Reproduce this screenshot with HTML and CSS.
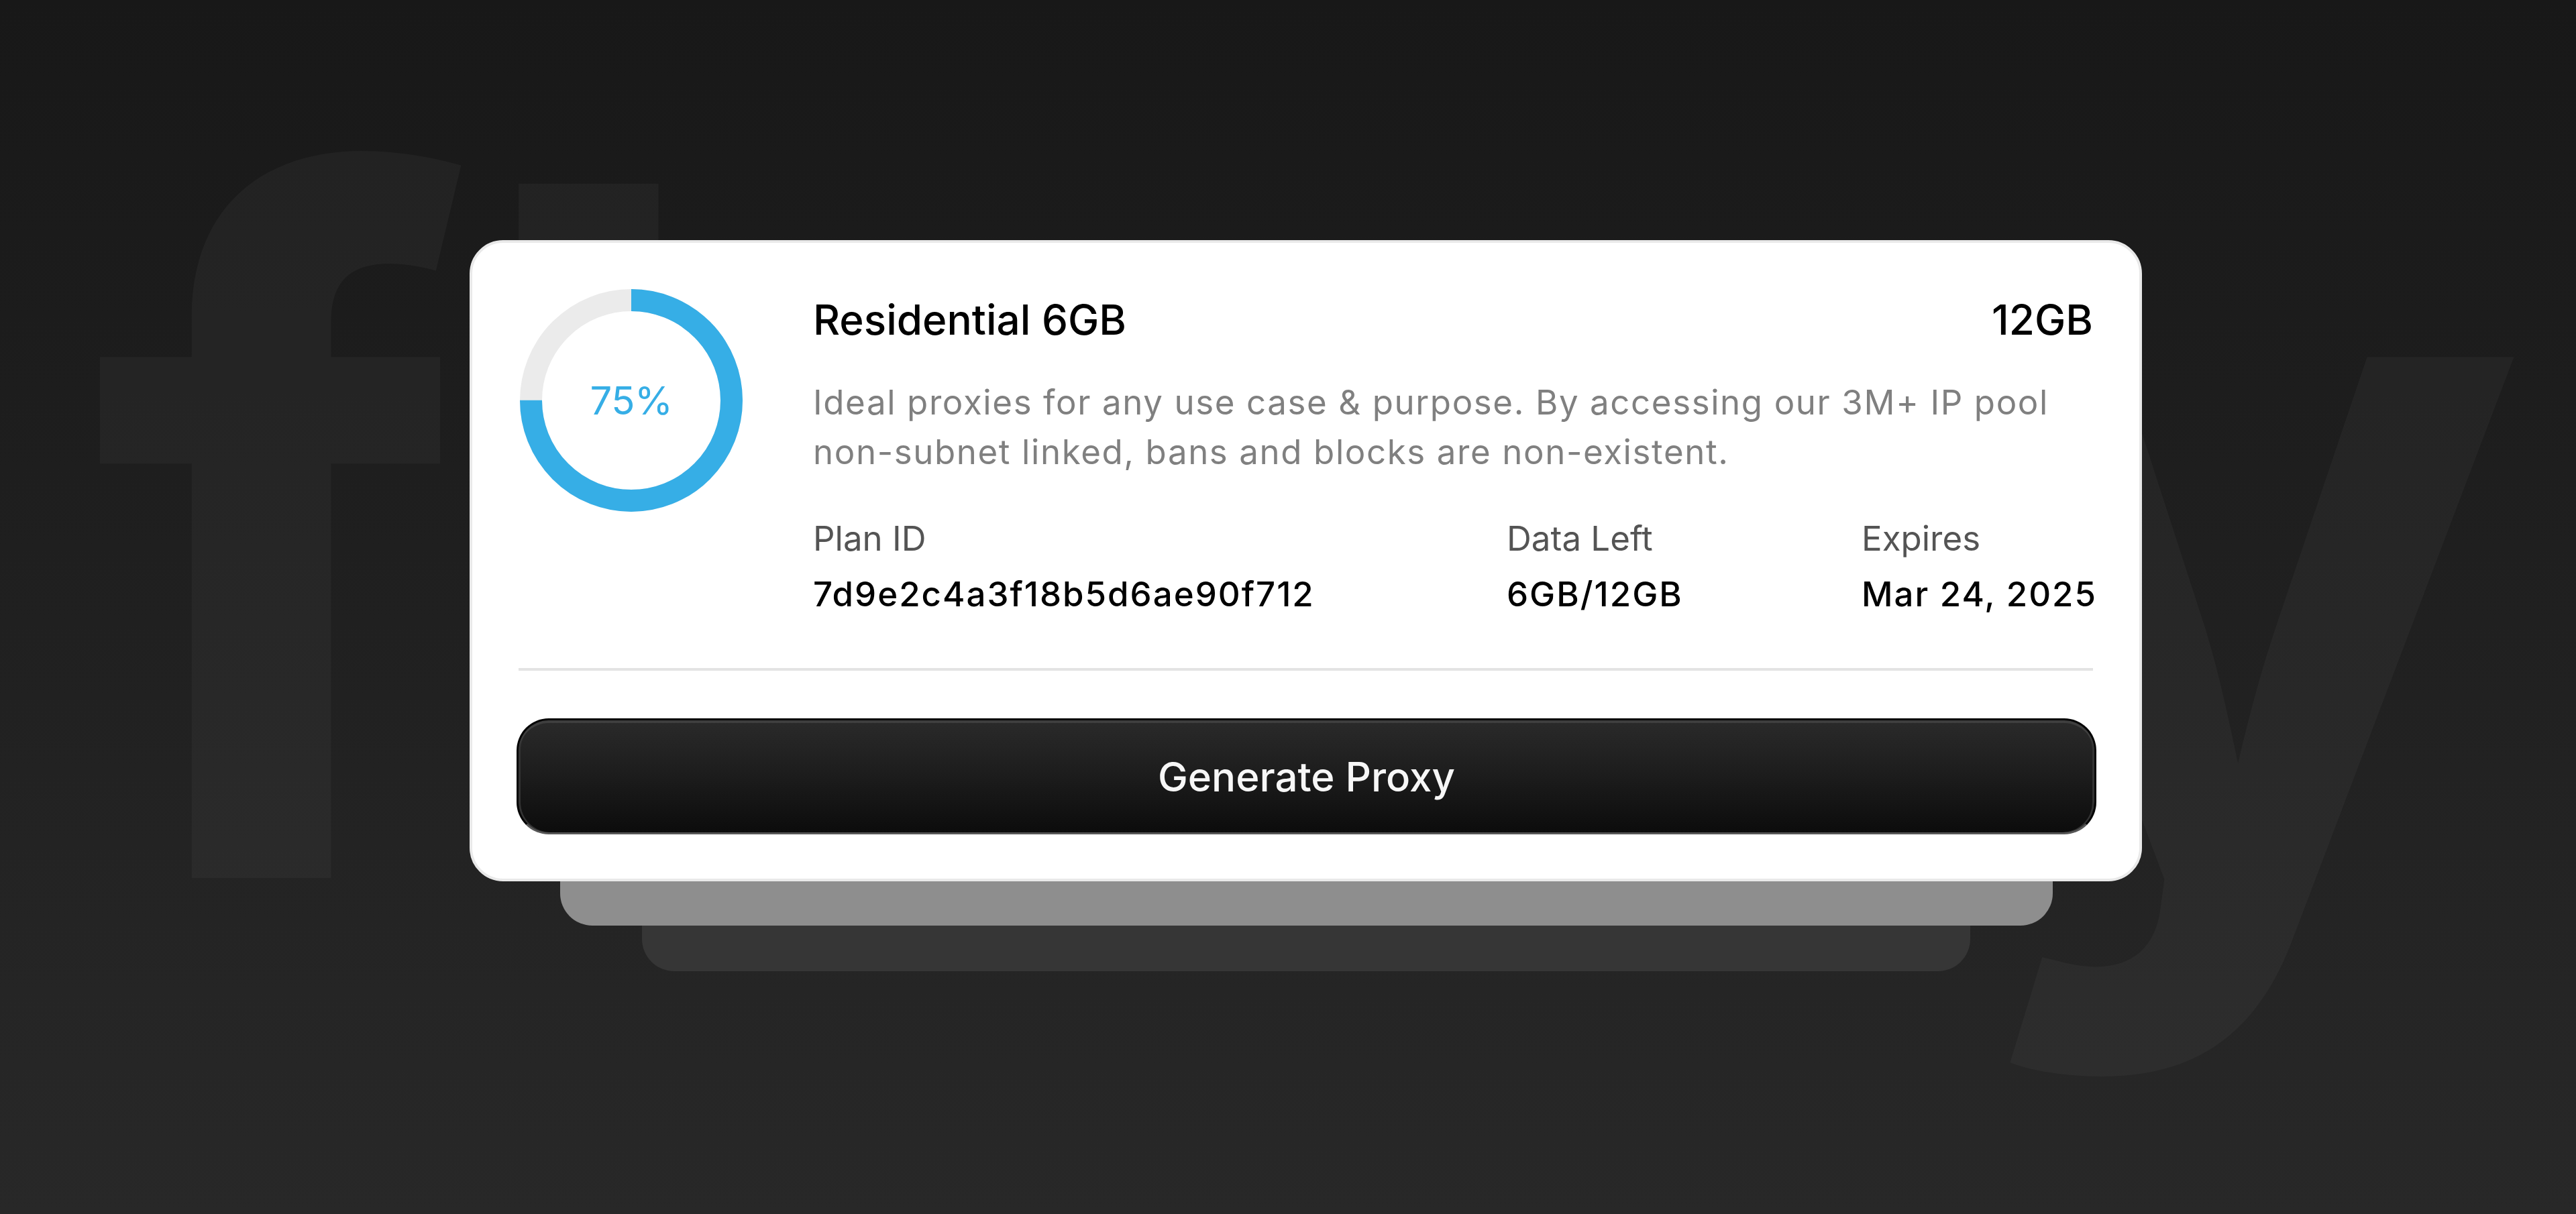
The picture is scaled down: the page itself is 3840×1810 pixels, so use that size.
FILE: index.html
```html
<!DOCTYPE html>
<html lang="en">
<head>
<meta charset="utf-8">
<title>Residential 6GB</title>
<link rel="stylesheet" href="styles.css">
</head>
<body>
<div class="stage">
  <div class="bg-word bg-left" aria-hidden="true">fl</div>
  <div class="bg-word bg-right" aria-hidden="true">y</div>

  <div class="card-stack">
    <div class="layer layer-back"></div>
    <div class="layer layer-mid"></div>

    <div class="card">
      <div class="top">
        <div class="donut">
          <svg class="donut-svg" viewBox="0 0 332 332" width="332" height="332">
            <circle cx="166" cy="166" r="149.5" fill="none" stroke="#ebebeb" stroke-width="33"/>
            <circle cx="166" cy="166" r="149.5" fill="none" stroke="#36aee6" stroke-width="33"
              stroke-dasharray="704.5 939.3" transform="rotate(-90 166 166)"/>
          </svg>
          <span class="donut-label">75%</span>
        </div>

        <div class="info">
          <div class="head">
            <span class="title">Residential 6GB</span>
            <span class="title">12GB</span>
          </div>
          <p class="desc">Ideal proxies for any use case &amp; purpose. By accessing our 3M+ IP pool non-subnet linked, bans and blocks are non-existent.</p>
          <div class="meta">
            <div class="meta-item">
              <span class="meta-label">Plan ID</span>
              <span class="meta-value">7d9e2c4a3f18b5d6ae90f712</span>
            </div>
            <div class="meta-item">
              <span class="meta-label">Data Left</span>
              <span class="meta-value">6GB/12GB</span>
            </div>
            <div class="meta-item">
              <span class="meta-label">Expires</span>
              <span class="meta-value">Mar 24, 2025</span>
            </div>
          </div>
        </div>
      </div>

      <div class="divider"></div>

      <button class="btn" type="button">Generate Proxy</button>
    </div>
  </div>
</div>
</body>
</html>
```

FILE: styles.css
```css
* {
  box-sizing: border-box;
}

html,
body {
  margin: 0;
  padding: 0;
}

body {
  font-family: Inter, "Liberation Sans", Arial, sans-serif;
  background: #1e1e1e;
}

.stage {
  position: relative;
  width: 3840px;
  height: 1810px;
  overflow: hidden;
  background: linear-gradient(180deg, #181818 0%, #1f1f1f 45%, #282828 100%);
  display: flex;
  align-items: flex-start;
  padding: 358px 0 0 700px;
}

/* decorative background letters */
.bg-word {
  position: absolute;
  top: 80px;
  font-family: Inter, "Liberation Sans", sans-serif;
  font-weight: 700;
  font-size: 1423px;
  line-height: 1;
  color: rgba(255, 255, 255, 0.035);
  white-space: nowrap;
  pointer-events: none;
  user-select: none;
}

.bg-left {
  left: 135px;
  letter-spacing: -17px;
}

.bg-right {
  left: 2913px;
}

/* card stack */
.card-stack {
  position: relative;
  z-index: 1;
  width: 2493px;
}

.layer {
  position: absolute;
  height: 300px;
  border-radius: 48px;
}

.layer-mid {
  left: 135px;
  right: 133px;
  bottom: -66px;
  background: #8e8e8e;
  z-index: 1;
}

.layer-back {
  left: 257px;
  right: 256px;
  bottom: -134px;
  background: #363636;
  z-index: 0;
}

.card {
  position: relative;
  z-index: 2;
  background: #ffffff;
  border: 4px solid #e9e9e9;
  border-radius: 50px;
  padding: 69px 69px 66px 71px;
  display: flex;
  flex-direction: column;
}

.top {
  display: flex;
  align-items: flex-start;
  gap: 105px;
}

.donut {
  position: relative;
  flex: 0 0 332px;
  width: 332px;
  height: 332px;
  display: flex;
  align-items: center;
  justify-content: center;
}

.donut-svg {
  position: absolute;
  inset: 0;
  display: block;
}

.donut-label {
  position: relative;
  font-size: 58px;
  font-weight: 400;
  color: #36aee6;
  letter-spacing: -0.5px;
}

.info {
  flex: 1;
  min-width: 0;
  margin-top: 9px;
  display: flex;
  flex-direction: column;
}

.head {
  display: flex;
  justify-content: space-between;
  align-items: baseline;
}

.title {
  font-size: 62px;
  line-height: 74px;
  font-weight: 500;
  color: #000000;
}

.desc {
  margin: 49px 0 0 0;
  font-size: 51px;
  line-height: 74px;
  font-weight: 400;
  letter-spacing: 1.6px;
  color: #808080;
}

.meta {
  margin-top: 61px;
  display: grid;
  grid-template-columns: 1fr 529px 345px;
}

.meta-item {
  display: flex;
  flex-direction: column;
  gap: 21px;
  white-space: nowrap;
}

.meta-label {
  font-size: 51px;
  line-height: 62px;
  color: #545454;
}

.meta-value {
  font-size: 51px;
  line-height: 62px;
  font-weight: 500;
  letter-spacing: 2px;
  color: #000000;
}

.divider {
  margin-top: 79px;
  height: 4px;
  background: #e3e3e3;
  margin-left: -2px;
}

.btn {
  margin: 71px -5px 0 -5px;
  height: 173px;
  border: 3px solid #050505;
  border-bottom-color: #575757;
  border-radius: 48px;
  background: linear-gradient(180deg, #2a2a2a 0%, #1c1c1c 50%, #0c0c0c 100%);
  box-shadow: inset 0 4px 0 #3e3e3e, inset 3px 0 0 #333333, inset -3px 0 0 #333333;
  color: #f7f7f7;
  font-family: Inter, "Liberation Sans", sans-serif;
  font-size: 60px;
  font-weight: 500;
  cursor: pointer;
}
```
